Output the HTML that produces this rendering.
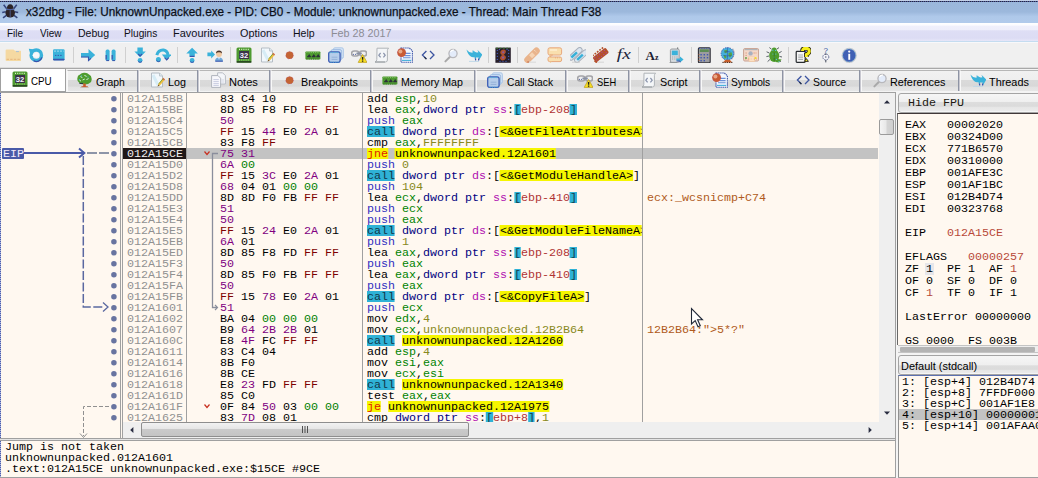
<!DOCTYPE html>
<html lang="en"><head><meta charset="utf-8"><title>x32dbg</title>
<style>
html,body{margin:0;padding:0}
body{width:1038px;height:478px;overflow:hidden;position:relative;background:#f0f0f0;font-family:"Liberation Sans",sans-serif;font-size:12px;color:#000}
div,span,svg{position:absolute;box-sizing:border-box}
.lb{white-space:pre;line-height:1;transform-origin:0 0}
.m{white-space:pre;font:11px/11px "Liberation Mono",monospace;transform-origin:0 0;transform:scaleX(1.06043);height:11px}
.m span{position:static}
.m i{font-style:normal;position:relative;top:1px}
.row{left:0;width:1038px;height:11px}
.cream{background:#fff8f0}
.vl{width:1px;background:#a0a0a0}
.hl{height:1px;background:#a0a0a0}
.g{color:#008000}.r{color:#800000}.p{color:#800080}.o{color:#808000}
.reg{color:#008300}.val{color:#888820}.mem{color:#000080}.seg{color:#b010b0}.push{color:#3030c0}
.br{background:#2fb2d6;color:#104050}.base{color:#b03434}
.y{background:#f6f600}.j{background:#f6f600;color:#e02000}.c{background:#2fb2d6;color:#12384a}
.cm{color:#b05a20}.ad{color:#909090}
.tab{top:70px;height:21px;border-top:1px solid #b6b6b6;border-left:1px solid #f8f8f8;background:linear-gradient(#f1f1f1 0,#eeeeee 44%,#dadada 47%,#d8d8d8 76%,#e2e2e2 80%,#e6e6e6 100%)}
.ts{top:70px;height:22px;width:2px;background:linear-gradient(90deg,#8e94a4 0,#8e94a4 60%,#c8c8d0 60%)}
</style></head><body>
<div style="left:0;top:0;width:1038px;height:23px;background:linear-gradient(#9bb7db 0,#9cb8dc 52%,#a6c1e4 62%,#afc9ea 72%,#b1caeb 100%)"></div>
<div style="left:0;top:0;width:1038px;height:1px;background:#c4d0e8"></div>
<div style="left:0;top:1px;width:1038px;height:1px;background:repeating-linear-gradient(90deg,#24243a 0,#24243a 1px,#4a5c9c 1px,#4a5c9c 2px)"></div>
<div style="left:0;top:23px;width:1038px;height:3px;background:linear-gradient(#ffffff 0,#fbfbff 70%,#f2f2fc 100%)"></div>
<div style="left:0;top:26px;width:1038px;height:15px;background:linear-gradient(#f0f0fc 0,#eeeefb 25%,#dedef5 32%,#dcdcf4 80%,#e6e6f8 100%)"></div>
<div style="left:0;top:41px;width:1038px;height:1px;background:#c4dcf0"></div>
<div style="left:0;top:42px;width:1038px;height:26px;background:#f0f0f0"></div>
<div style="left:0;top:42px;width:1038px;height:1px;background:#f8f8fa"></div>
<div style="left:0;top:67px;width:1038px;height:1px;background:#dcdcdc"></div>
<div style="left:0;top:68px;width:1038px;height:1px;background:#a8a8a8"></div>
<svg style="left:2.4px;top:3px" width="16.4" height="16.4" viewBox="0 0 16 16"><path d="M4.6 5.6 L1.6 1.8 M11.4 5.6 L14.4 1.8 M3.6 8.6 L0.2 9.2 M12.4 8.6 L15.8 9.2 M4.6 11.8 L1 14.6 M11.4 11.8 L15 14.6" stroke="#34447c" stroke-width="1.5"/><ellipse cx="8" cy="9.6" rx="4.7" ry="4.6" fill="#2c2428"/><path d="M4.8 5.6 Q4.8 1.2 8 1.2 Q11.2 1.2 11.2 5.6 Z" fill="#2c2428"/><path d="M4 6.4 H12" stroke="#5064a4" stroke-width="1"/><path d="M8 7 V14" stroke="#4c5c90" stroke-width=".9"/></svg>
<span class="lb" style="left:25.8px;top:5.30px;font-size:13px;transform:scaleX(0.9014);color:#0c1018;-webkit-text-stroke:0.25px #0c1018;">x32dbg - File: UnknownUnpacked.exe - PID: CB0 - Module: unknownunpacked.exe - Thread: Main Thread F38</span>
<span class="lb" style="left:7.3px;top:27.87px;font-size:11.5px;transform:scaleX(0.8688);color:#101018;">File</span>
<span class="lb" style="left:39.8px;top:27.87px;font-size:11.5px;transform:scaleX(0.8657);color:#101018;">View</span>
<span class="lb" style="left:77.5px;top:27.87px;font-size:11.5px;transform:scaleX(0.9147);color:#101018;">Debug</span>
<span class="lb" style="left:124.3px;top:27.87px;font-size:11.5px;transform:scaleX(0.8828);color:#101018;">Plugins</span>
<span class="lb" style="left:173.20000000000002px;top:27.87px;font-size:11.5px;transform:scaleX(0.9555);color:#101018;">Favourites</span>
<span class="lb" style="left:240.3px;top:27.87px;font-size:11.5px;transform:scaleX(0.9437);color:#101018;">Options</span>
<span class="lb" style="left:293.1px;top:27.87px;font-size:11.5px;transform:scaleX(0.9175);color:#101018;">Help</span>
<span class="lb" style="left:330.8px;top:27.87px;font-size:11.5px;transform:scaleX(0.9352);color:#8c8c94;">Feb 28 2017</span>
<svg style="left:5px;top:47px" width="16" height="16" viewBox="0 0 16 16"><path d="M0.6 3.4 Q0.6 2.4 1.6 2.4 H8.4 L10 3.8 H15.4 Q16.4 3.8 16.4 4.8 V13 Q16.4 14 15.4 14 H1.6 Q0.6 14 0.6 13 Z" fill="#f5d9a2"/><path d="M1.6 12.4 H15" stroke="#e9bd84" stroke-width="1.4" stroke-dasharray="2.4 1.2"/><path d="M11 4.6 H14" stroke="#a8c0d8" stroke-width="1"/></svg>
<svg style="left:28px;top:47px" width="16" height="16" viewBox="0 0 16 16"><circle cx="8.3" cy="8.2" r="5.2" fill="none" stroke="#3ab2da" stroke-width="3.4"/><path d="M13.2 9.5 A5.2 5.2 0 0 1 5 12.6" fill="none" stroke="#3a52ac" stroke-width="1.3" transform="translate(0.6,0.9)"/><path d="M0.8 1.8 L7.2 2.6 L2.4 7.6 Z" fill="#3ab2da"/><path d="M4 8.2 L8.8 5.6 V10.8 Z" fill="#fff"/><circle cx="8.6" cy="8.2" r="2.4" fill="#f6f8fc"/></svg>
<svg style="left:51px;top:47px" width="16" height="16" viewBox="0 0 16 16"><rect x="2" y="2.2" width="11.6" height="11" rx="1.2" fill="#3ab2da"/><rect x="2" y="11.8" width="11.6" height="1.6" rx=".8" fill="#3a52ac"/><path d="M3 4.2 H12.6" stroke="#8fd4ec" stroke-width="1.2" stroke-dasharray="2 1"/><path d="M4 8.4 H11.5" stroke="#3a52ac" stroke-width="1" stroke-dasharray="1.4 1.2"/></svg>
<div style="left:73px;top:47px;width:1px;height:16px;background:#d0d0d0"></div>
<svg style="left:80px;top:47px" width="16" height="16" viewBox="0 0 16 16"><path d="M1 6 H8.5 V2 L15.2 8 L8.5 14 V10.2 H1 Z" fill="#3ab2da"/><path d="M1 10 H8.5 V13.6 L11 11.4" fill="none" stroke="#3a52ac" stroke-width="1.1"/></svg>
<svg style="left:103px;top:47px" width="16" height="16" viewBox="0 0 16 16"><rect x="2.6" y="2.6" width="4" height="11.4" rx="1.6" fill="#3ab2da"/><rect x="8.6" y="2.6" width="4" height="11.4" rx="1.6" fill="#3ab2da"/><path d="M3.2 8 V12.5 M9.2 8 V12.5" stroke="#3a52ac" stroke-width="1.2"/><path d="M3.4 13.6 H6 M9.4 13.6 H12" stroke="#3a52ac" stroke-width="1"/></svg>
<div style="left:125px;top:47px;width:1px;height:16px;background:#d0d0d0"></div>
<svg style="left:132px;top:47px" width="16" height="16" viewBox="0 0 16 16"><path d="M5.4 0.6 H10.8 V4.6 H13.8 L8.1 10.2 L2.4 4.6 H5.4 Z" fill="#3ab2da"/><path d="M6.2 7 L8.1 9 L10 7" stroke="#3a52ac" stroke-width="1.2" fill="none"/><circle cx="8.1" cy="13.3" r="2.4" fill="#3ab2da"/><path d="M6.2 14.6 Q8.1 16.2 10 14.6" stroke="#3a52ac" stroke-width="1" fill="none"/></svg>
<svg style="left:155px;top:47px" width="16" height="16" viewBox="0 0 16 16"><path d="M1.8 8.2 Q3.4 2.6 8.6 3 Q12.4 3.6 13 8" fill="none" stroke="#3ab2da" stroke-width="3"/><path d="M6.8 7.6 H16.6 L11.7 13.2 Z" fill="#3ab2da"/><path d="M9.6 10.6 L11.7 12.9 L13.8 10.6" stroke="#3a52ac" stroke-width="1.1" fill="none"/><circle cx="3.4" cy="12.6" r="2.5" fill="#3ab2da"/><path d="M1.5 13.6 Q3.2 15.6 5.2 14" stroke="#3a52ac" stroke-width="1" fill="none"/></svg>
<div style="left:177px;top:47px;width:1px;height:16px;background:#d0d0d0"></div>
<svg style="left:184px;top:47px" width="16" height="16" viewBox="0 0 16 16"><path d="M8.1 0.8 L13.9 6.6 H10.8 V9.8 H5.4 V6.6 H2.3 Z" fill="#3ab2da"/><path d="M5.8 9.4 H10.4" stroke="#3a52ac" stroke-width="1.2"/><circle cx="8.1" cy="13.4" r="2.4" fill="#3ab2da"/><path d="M6.2 14.7 Q8.1 16.3 10 14.7" stroke="#3a52ac" stroke-width="1" fill="none"/></svg>
<svg style="left:207px;top:47px" width="16" height="16" viewBox="0 0 16 16"><path d="M0.4 5.4 H4.2 V3.4 L8 7.4 L4.2 11.4 V9.2 H0.4 Z" fill="#3ab2da"/><path d="M8 14.4 Q8 10.4 12 10.4 Q16 10.4 16 14.4 Z" fill="#6fa8d8"/><path d="M8.4 14.2 H15.8" stroke="#3a52ac" stroke-width="1"/><circle cx="12" cy="7" r="2.9" fill="#f0c8a0"/><path d="M9 6.4 Q9 3.4 12 3.4 Q15 3.4 15 6.4 Q13.6 5 12 5.2 Q10.4 5 9 6.4Z" fill="#4a3428"/><path d="M11 10.2 H13 L12 12.8 Z" fill="#e8eef8"/></svg>
<div style="left:230px;top:47px;width:1px;height:16px;background:#d0d0d0"></div>
<svg style="left:236px;top:47px" width="16" height="16" viewBox="0 0 16 16"><rect x="0.5" y="0.6" width="15" height="15" rx="1.5" fill="#4e9a30"/><rect x="0.5" y="14" width="15" height="1.8" rx=".9" fill="#2a4a20"/><path d="M3 2.4 H13.2" stroke="#d8f0c8" stroke-width="1.2" stroke-dasharray="1 1.2"/><path d="M3 13 H13" stroke="#a8d890" stroke-width="1" stroke-dasharray="1 1.2"/><rect x="3.2" y="4" width="9.8" height="8" fill="#3a3448"/><text x="8.1" y="11" font-family="Liberation Sans,sans-serif" font-weight="bold" font-size="7.6" fill="#f4f4ff" text-anchor="middle">32</text></svg>
<svg style="left:259px;top:47px" width="16" height="16" viewBox="0 0 16 16"><path d="M2.5 1 H10.5 L13.5 4 V15 H2.5 Z" fill="#f2f8fc" stroke="#b4bcc4" stroke-width="1"/><path d="M10.5 1 V4 H13.5" fill="#dfe8f0" stroke="#b4bcc4" stroke-width=".8"/><path d="M4 3 L9 13" stroke="#d6ecf6" stroke-width="3"/><path d="M8.6 14.6 L9.6 11.4 L14.2 5.8 L16 7.4 L11.4 13 Z" fill="#f0c040"/><path d="M13.3 6.9 L14.2 5.8 L16 7.4 L15.1 8.5Z" fill="#d06858"/><path d="M8.6 14.6 L9.3 12.4 L10.6 13.6Z" fill="#705030"/><path d="M10 11.6 L14 6.8" stroke="#70a040" stroke-width=".9"/></svg>
<svg style="left:282px;top:47px" width="16" height="16" viewBox="0 0 16 16"><circle cx="7.6" cy="8.2" r="3.8" fill="#c46434"/><circle cx="7.6" cy="8.2" r="3.8" fill="none" stroke="#b04890" stroke-width=".6" stroke-dasharray="1 2.4"/></svg>
<svg style="left:305px;top:47px" width="16" height="16" viewBox="0 0 16 16"><rect x="0.4" y="4.4" width="15" height="8.2" rx=".8" fill="#4e9a30"/><path d="M1.4 5.2 H14.6" stroke="#9cd080" stroke-width="1" stroke-dasharray="1 1.2"/><path d="M1.4 12 H14.6" stroke="#38702a" stroke-width="1" stroke-dasharray="1.2 1"/><path d="M2.4 9.4 L4.2 7 L6 9.4 Z M7 9.4 L8.8 7 L10.6 9.4 Z M11.4 9.4 L13.2 7 L15 9.4Z" fill="#2c3238"/><path d="M2.2 9.6 H14.8" stroke="#2c3238" stroke-width="1.4" stroke-dasharray="3.6 1"/></svg>
<svg style="left:328px;top:47px" width="16" height="16" viewBox="0 0 16 16"><rect x="5.4" y="0.8" width="10" height="10.6" rx="1.6" fill="#d4e4f6" stroke="#a8c4e4" stroke-width=".9"/><rect x="3" y="2.6" width="10.6" height="10.6" rx="1.6" fill="#c8dcf2" stroke="#98b8e0" stroke-width=".9"/><rect x="0.7" y="4.8" width="11.4" height="10.6" rx="2" fill="#b6cdea" stroke="#3c5cb4" stroke-width="1.3"/><path d="M1.6 5.6 H11.2" stroke="#48b8dc" stroke-width="1" stroke-dasharray="1.2 1.2"/><path d="M3.6 10.2 H9.4 M3.6 12.4 H9.4" stroke="#94b0d8" stroke-width="1"/><path d="M2.4 15.2 H10.6" stroke="#48b8dc" stroke-width=".9" stroke-dasharray="1.2 1.2"/></svg>
<svg style="left:351px;top:47px" width="16" height="16" viewBox="0 0 16 16"><rect x="0.6" y="4" width="7.2" height="5" rx="2.4" fill="none" stroke="#a4a4a8" stroke-width="1.6"/><rect x="8.6" y="4" width="7" height="5" rx="2.4" fill="none" stroke="#a4a4a8" stroke-width="1.6"/><rect x="5.4" y="5.6" width="5.4" height="1.8" fill="#8890a4"/><path d="M2 7.4 H6" stroke="#5a68a8" stroke-width="1" stroke-dasharray="1 1"/><path d="M11.6 7.4 L16 15.4 H7.2 Z" fill="#f8e020" stroke="#b89820" stroke-width=".7"/><path d="M11.6 10 V12.8 M11.6 13.6 V14.8" stroke="#202020" stroke-width="1.4"/></svg>
<svg style="left:374px;top:47px" width="16" height="16" viewBox="0 0 16 16"><path d="M3 1.2 H14.6 Q13.4 2.2 13.4 3.6 V13 Q13.4 15 11.4 15 H1 Q2.8 14.2 2.8 12.6 Z" fill="#f4f6f8" stroke="#b0b4b8" stroke-width="1"/><path d="M1 15 H11" stroke="#a0a4a8" stroke-width="1.2"/><path d="M6.6 6 L4.8 8.2 L6.6 10.4 M9.4 6 L11.2 8.2 L9.4 10.4" fill="none" stroke="#8a94ac" stroke-width="1.2"/></svg>
<svg style="left:397px;top:47px" width="16" height="16" viewBox="0 0 16 16"><path d="M4 1 H12.4 L15.4 4 V15.2 H4 Z" fill="#f4f8fe" stroke="#3c54a8" stroke-width="1.1" stroke-dasharray="1.4 .7"/><path d="M7.6 6.4 H13.6 M7.6 8.6 H13.6 M6 10.8 H13.6" stroke="#6a90d8" stroke-width="1.1"/><path d="M5 13.4 H14.2" stroke="#4cb4dc" stroke-width="1.2"/><circle cx="4.6" cy="5.6" r="4.4" fill="#c85c34"/><circle cx="3.4" cy="4.4" r="2" fill="#e8a888"/><circle cx="4.6" cy="5.6" r="4.2" fill="none" stroke="#b040a0" stroke-width=".5" stroke-dasharray="1 2.2"/></svg>
<svg style="left:420px;top:47px" width="16" height="16" viewBox="0 0 16 16"><path d="M6.4 4 L2.4 8 L6.4 12 M10 4 L14 8 L10 12" fill="none" stroke="#3c54a0" stroke-width="1.3"/><path d="M4.4 10.2 L6.4 12.2" stroke="#202838" stroke-width="1.2"/></svg>
<svg style="left:443px;top:47px" width="16" height="16" viewBox="0 0 16 16"><path d="M7 9.8 L2.4 14.4" stroke="#a8a8a8" stroke-width="2" stroke-linecap="round"/><circle cx="10" cy="6.6" r="4.1" fill="#e4ecfa" stroke="#b8b8bc" stroke-width="1.3"/><path d="M7.4 5 Q8.6 2.8 11 3.2" fill="none" stroke="#fff" stroke-width="1.2"/></svg>
<svg style="left:466px;top:47px" width="16" height="16" viewBox="0 0 16 16"><path d="M0.4 2.4 Q3.6 6.6 7.6 5.6 L6.4 3 L12.2 7 L9 12.8 L8.4 10 Q3.4 11.6 0.4 2.4Z" fill="#3ab2da"/><path d="M6 4.2 Q9.4 6.4 12.4 5.2 L11.4 2.8 L16.4 7.6 L12.8 13.6 L12.6 10.4 Q8.6 11.4 6 4.2Z" fill="#3ab2da"/><path d="M9.6 11.6 L9.6 13.4 M12.6 11.4 V13.6" stroke="#3a52ac" stroke-width="1.2"/><path d="M3 14.4 H13" stroke="#c0d8e8" stroke-width="1"/></svg>
<div style="left:488px;top:47px;width:1px;height:16px;background:#d0d0d0"></div>
<svg style="left:495px;top:47px" width="16" height="16" viewBox="0 0 16 16"><rect x="0.4" y="0.6" width="15.4" height="15.2" fill="#28202c"/><path d="M1 1.2 H15" stroke="#3c7c30" stroke-width="1" stroke-dasharray="2 1.4"/><path d="M8.4 2.6 Q11.8 2.8 10.6 5.8 Q9.8 7.4 8.6 8 Q11.8 9 10.6 11.8 Q9.4 13.6 7.2 13.4 Q4.2 12.6 5.4 9.8 Q6 8.6 7.4 8 Q4.4 7 5.6 4.2 Q6.4 2.6 8.4 2.6Z" fill="#b0522e"/><circle cx="8.2" cy="5.2" r="1" fill="#8858a8"/><circle cx="8" cy="10.6" r="1.1" fill="#8858a8"/><g fill="#4058b0"><circle cx="2.4" cy="3.4" r=".7"/><circle cx="2.4" cy="6.4" r=".7"/><circle cx="2.4" cy="9.4" r=".7"/><circle cx="2.4" cy="12.4" r=".7"/><circle cx="13.6" cy="3.4" r=".7"/><circle cx="13.6" cy="6.4" r=".7"/><circle cx="13.6" cy="9.4" r=".7"/><circle cx="13.6" cy="12.4" r=".7"/><circle cx="5" cy="14.4" r=".7"/><circle cx="8" cy="14.6" r=".7"/><circle cx="11" cy="14.4" r=".7"/><circle cx="4.4" cy="2.4" r=".6"/><circle cx="12" cy="2.4" r=".6"/></g></svg>
<div style="left:517px;top:47px;width:1px;height:16px;background:#d0d0d0"></div>
<svg style="left:524px;top:47px" width="16" height="16" viewBox="0 0 16 16"><rect x="-1.6" y="5" width="19.2" height="6.6" rx="3.3" fill="#e9b48c" transform="rotate(-45 8 8.3)"/><rect x="6" y="6.2" width="4.2" height="4.2" fill="#f6d4b4" transform="rotate(-45 8 8.3)"/><path d="M10.4 3.2 L13 5.8" stroke="#fbe8d4" stroke-width="1" stroke-dasharray="1 1"/><path d="M4 15.2 H12" stroke="#d8d8d8" stroke-width="1"/><path d="M3.4 15 H5" stroke="#c05830" stroke-width="1"/></svg>
<svg style="left:547px;top:47px" width="16" height="16" viewBox="0 0 16 16"><rect x="1" y="0.8" width="13.6" height="7.2" rx="1.8" fill="#f9dfae" stroke="#e8a87c" stroke-width="1"/><path d="M3 8 V10 L5.6 8Z" fill="#f9dfae" stroke="#e8a87c" stroke-width=".8"/><rect x="1" y="10" width="13.6" height="4.6" rx="1.6" fill="#f9dfae" stroke="#e8a87c" stroke-width="1"/><path d="M3 14.6 V16 L5.2 14.6Z" fill="#f0c890"/><path d="M3 3 H10" stroke="#fff4dc" stroke-width="1.2"/><path d="M8 10.8 H12.6" stroke="#e8a87c" stroke-width="1" stroke-dasharray="1 1"/></svg>
<svg style="left:570px;top:47px" width="16" height="16" viewBox="0 0 16 16"><g transform="rotate(-42 8 8)"><rect x="-1.4" y="3" width="16.4" height="4.8" rx="2.4" fill="#dce6f0" stroke="#a8b0bc" stroke-width="1"/><rect x="1.4" y="4.2" width="7.6" height="2.4" fill="#36b0d8"/><rect x="1.4" y="8.6" width="16.4" height="4.8" rx="2.4" fill="#dce6f0" stroke="#a8b0bc" stroke-width="1"/><rect x="4.2" y="9.8" width="7.6" height="2.4" fill="#36b0d8"/></g><path d="M2 15.2 H10" stroke="#d0d0d0" stroke-width="1"/></svg>
<svg style="left:593px;top:47px" width="16" height="16" viewBox="0 0 16 16"><g transform="rotate(-38 8 8)"><rect x="-0.4" y="4.8" width="16.4" height="6.2" rx="1.6" fill="#b4502a"/><path d="M1.4 4.2 V2.6 M4.4 4.2 V2.6 M7.4 4.2 V2.6 M10.4 4.2 V2.6 M13.4 4.2 V2.6" stroke="#b4502a" stroke-width="1.8"/><path d="M1 6.4 H15 M1 9.4 H15" stroke="#a848b8" stroke-width="1" stroke-dasharray="1 2"/></g><path d="M1.6 13.6 L4 15.6" stroke="#b4502a" stroke-width="2"/><path d="M5 15.2 H11" stroke="#d4d4d4" stroke-width="1"/></svg>
<svg style="left:616px;top:47px" width="16" height="16" viewBox="0 0 16 16"><text x="0.8" y="12.4" font-family="Liberation Serif,serif" font-style="italic" font-size="15.5" textLength="14" lengthAdjust="spacingAndGlyphs" fill="#20263c">fx</text></svg>
<div style="left:638px;top:47px;width:1px;height:16px;background:#d0d0d0"></div>
<svg style="left:645px;top:47px" width="16" height="16" viewBox="0 0 16 16"><text x="0.6" y="13" font-family="Liberation Serif,serif" font-weight="bold" font-size="13" fill="#1c2030">A</text><text x="10" y="13" font-family="Liberation Serif,serif" font-weight="bold" font-size="8" fill="#1c2030">z</text></svg>
<svg style="left:668px;top:47px" width="16" height="16" viewBox="0 0 16 16"><path d="M9.6 0.4 V3" stroke="#707478" stroke-width="1.2"/><rect x="2.4" y="2" width="8.8" height="13.4" rx="1.4" fill="#d6dade" stroke="#989ca0" stroke-width="1"/><rect x="3.8" y="3.6" width="6" height="4.6" fill="#3ab2da"/><path d="M4 10 H10 M4 12 H10" stroke="#a0a4a8" stroke-width="1" stroke-dasharray="1.2 1"/><path d="M8.4 11.4 H12 V9.6 L15.6 12.6 L12 15.6 V13.8 H8.4Z" fill="#3ab2da"/><path d="M8.6 14 H12 V15.4" stroke="#3a52ac" stroke-width="1" fill="none"/><path d="M1.6 15.6 H9" stroke="#909498" stroke-width="1"/></svg>
<div style="left:691px;top:47px;width:1px;height:16px;background:#d0d0d0"></div>
<svg style="left:697px;top:47px" width="16" height="16" viewBox="0 0 16 16"><rect x="1.4" y="0.8" width="11.8" height="15" rx="1" fill="#9c9ca0" stroke="#303038" stroke-width="1.1"/><rect x="2.8" y="2.4" width="9" height="2.6" fill="#5c8c54"/><path d="M2 1.4 H12.6" stroke="#4060b0" stroke-width="1" stroke-dasharray="1 1.4"/><g fill="#4058b0"><rect x="3.4" y="7" width="1.4" height="1.4"/><rect x="6.6" y="7" width="1.4" height="1.4"/><rect x="9.8" y="7" width="1.4" height="1.4"/><rect x="3.4" y="10" width="1.4" height="1.4"/><rect x="6.6" y="10" width="1.4" height="1.4"/><rect x="9.8" y="10" width="1.4" height="1.4"/><rect x="3.4" y="13" width="1.4" height="1.4"/><rect x="6.6" y="13" width="1.4" height="1.4"/></g><path d="M2 7 V14" stroke="#c06030" stroke-width=".8" stroke-dasharray="1 2"/></svg>
<svg style="left:720px;top:47px" width="16" height="16" viewBox="0 0 16 16"><path d="M12.6 1.6 Q16 6.6 11.6 12.4" fill="none" stroke="#b4b8bc" stroke-width="1.2"/><circle cx="7.4" cy="6.8" r="6.3" fill="#44b0dc"/><circle cx="7.4" cy="6.8" r="6.3" fill="none" stroke="#3c54b0" stroke-width=".9" stroke-dasharray="1.4 1"/><path d="M4 3.6 Q6 2.4 8 3.4 L7 5.6 L5 6.2 Z M8.6 6 L11.6 5.2 L12.2 8.2 L10 10.6 L8.4 8.6Z M3.6 8 L6 8.6 L6.4 11 L4.6 11.4Z" fill="#58a440"/><path d="M4.2 5 Q7.4 4 10.6 5 M3.4 8.4 Q7.4 9.6 11.4 8.4 M7.4 1 V12.6" stroke="#3050a8" stroke-width=".6" fill="none"/><path d="M3 15.6 L5.4 12.8 H9.8 L12.2 15.6Z" fill="#c8602c"/><path d="M2.4 15.4 H12.8" stroke="#402818" stroke-width="1" stroke-dasharray="1.2 1"/></svg>
<svg style="left:743px;top:47px" width="16" height="16" viewBox="0 0 16 16"><rect x="0.6" y="1.6" width="15" height="12.4" rx="1.2" fill="#f4d8c8" stroke="#c8a090" stroke-width="1"/><path d="M1.6 2.6 H14.6" stroke="#b0b4b8" stroke-width="1.2"/><circle cx="7.6" cy="6.4" r="2.2" fill="#a8b0c0"/><path d="M2.6 6 H4.6 M10.6 6 H13.4 M2.6 8.4 H4.6" stroke="#d08868" stroke-width="1" stroke-dasharray="1 1"/><path d="M5 9.4 H12 V14.8 H6 Z" fill="#f6cca4"/><path d="M2 12 H14" stroke="#e8a070" stroke-width="1" stroke-dasharray="1.4 1.4"/><circle cx="12.6" cy="11" r="1" fill="#f0e020"/><circle cx="3" cy="11" r=".9" fill="#58a040"/><path d="M6.4 11 H11 M6.4 13 H11" stroke="#fff4e4" stroke-width="1"/></svg>
<svg style="left:766px;top:47px" width="16" height="16" viewBox="0 0 16 16"><path d="M5.4 2 L3.4 0.6 M11 2 L13 0.6 M3.4 6 L0.6 4.8 M3 9 L0.4 9.6 M4 12.4 L1.6 14.6 M13 6 L15.6 4.4 M13.4 9.4 L16 10 M12.6 12.6 L15 14.8" stroke="#5c6468" stroke-width="1"/><ellipse cx="8.2" cy="8.8" rx="5" ry="6.2" fill="#4e9c2c"/><circle cx="8.2" cy="3.2" r="2.6" fill="#4e9c2c"/><path d="M11 12 L15.6 12.6 L13 15.4 L9.4 15Z" fill="#4e9c2c"/><g fill="#58c4e4"><circle cx="6.8" cy="3.2" r=".6"/><circle cx="9.6" cy="3.4" r=".6"/><circle cx="7" cy="7" r=".6"/><circle cx="9.8" cy="7" r=".6"/><circle cx="8.2" cy="10" r=".6"/><circle cx="10.4" cy="12.4" r=".6"/><circle cx="13" cy="14.6" r=".6"/></g><path d="M8.2 5.4 V14" stroke="#2c6c20" stroke-width=".7"/></svg>
<div style="left:788px;top:47px;width:1px;height:16px;background:#d0d0d0"></div>
<svg style="left:795px;top:47px" width="16" height="16" viewBox="0 0 16 16"><rect x="1.2" y="4.4" width="9" height="11" rx=".8" fill="#f6f6f6" stroke="#282c30" stroke-width="1.2"/><path d="M3.2 8 H8 M3.2 10.2 H8 M3.2 12.4 H8" stroke="#a8acb0" stroke-width="1.2"/><path d="M7.4 4 Q7.6 1.2 10.8 1.2 Q14.6 1.4 14.2 4.6 Q14 6.6 11.4 7.6 V10" fill="none" stroke="#201c10" stroke-width="4.6"/><path d="M7.4 4 Q7.6 1.2 10.8 1.2 Q14.6 1.4 14.2 4.6 Q14 6.6 11.4 7.6 V10" fill="none" stroke="#f4ec1c" stroke-width="3"/><path d="M9.4 14.4 L11.4 11.6 L13.4 14.4Z" fill="#f4ec1c" stroke="#201c10" stroke-width=".9"/><circle cx="10.6" cy="4.4" r=".7" fill="#3050b0"/></svg>
<svg style="left:818px;top:47px" width="16" height="16" viewBox="0 0 16 16"><text x="5.4" y="6.4" font-family="Liberation Sans,sans-serif" font-size="8" fill="#3050a0">?</text><circle cx="7.8" cy="10" r="3" fill="#f4f4f8" stroke="#5c6490" stroke-width="1" stroke-dasharray="1.4 1"/><path d="M7.8 6.4 V8 M7.8 13 V15.4" stroke="#404858" stroke-width="1"/><circle cx="7.8" cy="10" r=".8" fill="#606880"/></svg>
<svg style="left:841px;top:47px" width="16" height="16" viewBox="0 0 16 16"><circle cx="8.2" cy="8.4" r="7.6" fill="#c4c8d0"/><circle cx="8.2" cy="8.4" r="6.4" fill="#4060b4"/><circle cx="8.2" cy="8.4" r="6.4" fill="none" stroke="#58b8e0" stroke-width=".7" stroke-dasharray="1 2"/><rect x="7.3" y="6.8" width="1.9" height="6" fill="#fff"/><circle cx="8.2" cy="4.6" r="1.1" fill="#fff"/></svg>
<div style="left:0;top:69px;width:1038px;height:24px;background:#f4f4f4"></div>
<div style="left:0;top:92px;width:1038px;height:1px;background:#a0a0a0"></div>
<div style="left:0px;top:68px;width:66px;height:24px;background:#fff;border:1px solid #a0a0a0"></div>
<svg style="left:12px;top:71px" width="16" height="16" viewBox="0 0 16 16"><rect x="0.5" y="0.6" width="15" height="15" rx="1.5" fill="#4e9a30"/><rect x="0.5" y="14" width="15" height="1.8" rx=".9" fill="#2a4a20"/><path d="M3 2.4 H13.2" stroke="#d8f0c8" stroke-width="1.2" stroke-dasharray="1 1.2"/><path d="M3 13 H13" stroke="#a8d890" stroke-width="1" stroke-dasharray="1 1.2"/><rect x="3.2" y="4" width="9.8" height="8" fill="#3a3448"/><text x="8.1" y="11" font-family="Liberation Sans,sans-serif" font-weight="bold" font-size="7.6" fill="#f4f4ff" text-anchor="middle">32</text></svg>
<span class="lb" style="left:31.3px;top:76.27px;font-size:11.5px;transform:scaleX(0.8525);color:#000;">CPU</span>
<div class="tab" style="left:67px;width:70px"></div>
<svg style="left:76px;top:72px" width="16" height="16" viewBox="0 0 16 16"><path d="M1.4 6 Q1.4 3.4 4 2.6 Q5.6 0.6 8.4 0.8 Q11.4 0.6 13 2.6 Q15.6 3.6 15.6 6.4 Q16.2 9.6 13.6 11 Q11.6 12.8 8.6 12 Q5.4 13 3.4 11 Q0.8 9.6 1.4 6Z" fill="#4e9c2e"/><path d="M4.4 4.6 L6.4 5.6 M8.4 3.4 L10.6 4.4 M6.6 8 L8.8 7 M10.4 7.6 L12.6 6.6 M3.6 8.4 L5 9" stroke="#d4f0d4" stroke-width="1"/><circle cx="5.4" cy="3.8" r=".6" fill="#48c0e0"/><circle cx="12" cy="5" r=".6" fill="#48c0e0"/><circle cx="3.4" cy="7.6" r=".6" fill="#48c0e0"/><path d="M3.4 11.4 H7" stroke="#283048" stroke-width="1"/><path d="M7.2 11.6 H9.8 V14.2 H11.8 V15.4 H5.4 V14.2 H7.2Z" fill="#c85a2c"/><path d="M4 15.8 H13" stroke="#c0c0c0" stroke-width="1"/></svg>
<span class="lb" style="left:95.6px;top:77.27px;font-size:11.5px;transform:scaleX(0.9010);color:#000;">Graph</span>
<div class="tab" style="left:139px;width:58px"></div>
<svg style="left:149px;top:72px" width="16" height="16" viewBox="0 0 16 16"><path d="M2.5 1 H10.5 L13.5 4 V15 H2.5 Z" fill="#f2f8fc" stroke="#b4bcc4" stroke-width="1"/><path d="M10.5 1 V4 H13.5" fill="#dfe8f0" stroke="#b4bcc4" stroke-width=".8"/><path d="M4 3 L9 13" stroke="#d6ecf6" stroke-width="3"/><path d="M8.6 14.6 L9.6 11.4 L14.2 5.8 L16 7.4 L11.4 13 Z" fill="#f0c040"/><path d="M13.3 6.9 L14.2 5.8 L16 7.4 L15.1 8.5Z" fill="#d06858"/><path d="M8.6 14.6 L9.3 12.4 L10.6 13.6Z" fill="#705030"/><path d="M10 11.6 L14 6.8" stroke="#70a040" stroke-width=".9"/></svg>
<span class="lb" style="left:167.8px;top:77.27px;font-size:11.5px;transform:scaleX(0.9329);color:#000;">Log</span>
<div class="tab" style="left:199px;width:70px"></div>
<svg style="left:210px;top:72px" width="16" height="16" viewBox="0 0 16 16"><path d="M7.6 0.8 H12.6 L15.4 3.6 V12 H7.6Z" fill="#f4f6fa" stroke="#b8bcc4" stroke-width="1"/><path d="M1.6 3.6 H8 L10.6 6.2 V15.4 H1.6Z" fill="#f8f8fc" stroke="#b0b4bc" stroke-width="1"/><path d="M3.4 7.6 H8.8 M3.4 9.6 H8.8 M3.4 11.6 H8.8 M3.4 13.4 H8.8" stroke="#c8cce0" stroke-width="1"/><path d="M10.6 8 H14 M10.6 10 H14" stroke="#d4d8e4" stroke-width="1"/></svg>
<span class="lb" style="left:229.20000000000002px;top:77.27px;font-size:11.5px;transform:scaleX(0.9587);color:#000;">Notes</span>
<div class="tab" style="left:271px;width:99px"></div>
<svg style="left:282px;top:72px" width="16" height="16" viewBox="0 0 16 16"><circle cx="7.6" cy="8.2" r="3.8" fill="#c46434"/><circle cx="7.6" cy="8.2" r="3.8" fill="none" stroke="#b04890" stroke-width=".6" stroke-dasharray="1 2.4"/></svg>
<span class="lb" style="left:300.8px;top:77.27px;font-size:11.5px;transform:scaleX(0.9369);color:#000;">Breakpoints</span>
<div class="tab" style="left:372px;width:102px"></div>
<svg style="left:382px;top:72px" width="16" height="16" viewBox="0 0 16 16"><rect x="0.4" y="4.4" width="15" height="8.2" rx=".8" fill="#4e9a30"/><path d="M1.4 5.2 H14.6" stroke="#9cd080" stroke-width="1" stroke-dasharray="1 1.2"/><path d="M1.4 12 H14.6" stroke="#38702a" stroke-width="1" stroke-dasharray="1.2 1"/><path d="M2.4 9.4 L4.2 7 L6 9.4 Z M7 9.4 L8.8 7 L10.6 9.4 Z M11.4 9.4 L13.2 7 L15 9.4Z" fill="#2c3238"/><path d="M2.2 9.6 H14.8" stroke="#2c3238" stroke-width="1.4" stroke-dasharray="3.6 1"/></svg>
<span class="lb" style="left:401.3px;top:77.27px;font-size:11.5px;transform:scaleX(0.9210);color:#000;">Memory Map</span>
<div class="tab" style="left:476px;width:89px"></div>
<svg style="left:487px;top:72px" width="16" height="16" viewBox="0 0 16 16"><rect x="5.4" y="0.8" width="10" height="10.6" rx="1.6" fill="#d4e4f6" stroke="#a8c4e4" stroke-width=".9"/><rect x="3" y="2.6" width="10.6" height="10.6" rx="1.6" fill="#c8dcf2" stroke="#98b8e0" stroke-width=".9"/><rect x="0.7" y="4.8" width="11.4" height="10.6" rx="2" fill="#b6cdea" stroke="#3c5cb4" stroke-width="1.3"/><path d="M1.6 5.6 H11.2" stroke="#48b8dc" stroke-width="1" stroke-dasharray="1.2 1.2"/><path d="M3.6 10.2 H9.4 M3.6 12.4 H9.4" stroke="#94b0d8" stroke-width="1"/><path d="M2.4 15.2 H10.6" stroke="#48b8dc" stroke-width=".9" stroke-dasharray="1.2 1.2"/></svg>
<span class="lb" style="left:507.0px;top:77.27px;font-size:11.5px;transform:scaleX(0.8886);color:#000;">Call Stack</span>
<div class="tab" style="left:567px;width:61px"></div>
<svg style="left:577px;top:72px" width="16" height="16" viewBox="0 0 16 16"><rect x="0.6" y="4" width="7.2" height="5" rx="2.4" fill="none" stroke="#a4a4a8" stroke-width="1.6"/><rect x="8.6" y="4" width="7" height="5" rx="2.4" fill="none" stroke="#a4a4a8" stroke-width="1.6"/><rect x="5.4" y="5.6" width="5.4" height="1.8" fill="#8890a4"/><path d="M2 7.4 H6" stroke="#5a68a8" stroke-width="1" stroke-dasharray="1 1"/><path d="M11.6 7.4 L16 15.4 H7.2 Z" fill="#f8e020" stroke="#b89820" stroke-width=".7"/><path d="M11.6 10 V12.8 M11.6 13.6 V14.8" stroke="#202020" stroke-width="1.4"/></svg>
<span class="lb" style="left:596.5px;top:77.27px;font-size:11.5px;transform:scaleX(0.8077);color:#000;">SEH</span>
<div class="tab" style="left:630px;width:69px"></div>
<svg style="left:641px;top:72px" width="16" height="16" viewBox="0 0 16 16"><path d="M3 1.2 H14.6 Q13.4 2.2 13.4 3.6 V13 Q13.4 15 11.4 15 H1 Q2.8 14.2 2.8 12.6 Z" fill="#f4f6f8" stroke="#b0b4b8" stroke-width="1"/><path d="M1 15 H11" stroke="#a0a4a8" stroke-width="1.2"/><path d="M6.6 6 L4.8 8.2 L6.6 10.4 M9.4 6 L11.2 8.2 L9.4 10.4" fill="none" stroke="#8a94ac" stroke-width="1.2"/></svg>
<span class="lb" style="left:659.6999999999999px;top:77.27px;font-size:11.5px;transform:scaleX(0.9355);color:#000;">Script</span>
<div class="tab" style="left:701px;width:81px"></div>
<svg style="left:712px;top:72px" width="16" height="16" viewBox="0 0 16 16"><path d="M4 1 H12.4 L15.4 4 V15.2 H4 Z" fill="#f4f8fe" stroke="#3c54a8" stroke-width="1.1" stroke-dasharray="1.4 .7"/><path d="M7.6 6.4 H13.6 M7.6 8.6 H13.6 M6 10.8 H13.6" stroke="#6a90d8" stroke-width="1.1"/><path d="M5 13.4 H14.2" stroke="#4cb4dc" stroke-width="1.2"/><circle cx="4.6" cy="5.6" r="4.4" fill="#c85c34"/><circle cx="3.4" cy="4.4" r="2" fill="#e8a888"/><circle cx="4.6" cy="5.6" r="4.2" fill="none" stroke="#b040a0" stroke-width=".5" stroke-dasharray="1 2.2"/></svg>
<span class="lb" style="left:730.5999999999999px;top:77.27px;font-size:11.5px;transform:scaleX(0.8889);color:#000;">Symbols</span>
<div class="tab" style="left:784px;width:75px"></div>
<svg style="left:795px;top:72px" width="16" height="16" viewBox="0 0 16 16"><path d="M6.4 4 L2.4 8 L6.4 12 M10 4 L14 8 L10 12" fill="none" stroke="#3c54a0" stroke-width="1.3"/><path d="M4.4 10.2 L6.4 12.2" stroke="#202838" stroke-width="1.2"/></svg>
<span class="lb" style="left:813.4px;top:77.27px;font-size:11.5px;transform:scaleX(0.9084);color:#000;">Source</span>
<div class="tab" style="left:861px;width:97px"></div>
<svg style="left:872px;top:72px" width="16" height="16" viewBox="0 0 16 16"><path d="M7 9.8 L2.4 14.4" stroke="#a8a8a8" stroke-width="2" stroke-linecap="round"/><circle cx="10" cy="6.6" r="4.1" fill="#e4ecfa" stroke="#b8b8bc" stroke-width="1.3"/><path d="M7.4 5 Q8.6 2.8 11 3.2" fill="none" stroke="#fff" stroke-width="1.2"/></svg>
<span class="lb" style="left:890.3px;top:77.27px;font-size:11.5px;transform:scaleX(0.9420);color:#000;">References</span>
<div class="tab" style="left:960px;width:78px"></div>
<svg style="left:970px;top:72px" width="16" height="16" viewBox="0 0 16 16"><path d="M0.4 2.4 Q3.6 6.6 7.6 5.6 L6.4 3 L12.2 7 L9 12.8 L8.4 10 Q3.4 11.6 0.4 2.4Z" fill="#3ab2da"/><path d="M6 4.2 Q9.4 6.4 12.4 5.2 L11.4 2.8 L16.4 7.6 L12.8 13.6 L12.6 10.4 Q8.6 11.4 6 4.2Z" fill="#3ab2da"/><path d="M9.6 11.6 L9.6 13.4 M12.6 11.4 V13.6" stroke="#3a52ac" stroke-width="1.2"/><path d="M3 14.4 H13" stroke="#c0d8e8" stroke-width="1"/></svg>
<span class="lb" style="left:989.3px;top:77.27px;font-size:11.5px;transform:scaleX(0.9457);color:#000;">Threads</span>
<div class="ts" style="left:137px"></div>
<div class="ts" style="left:197px"></div>
<div class="ts" style="left:269px"></div>
<div class="ts" style="left:370px"></div>
<div class="ts" style="left:474px"></div>
<div class="ts" style="left:565px"></div>
<div class="ts" style="left:628px"></div>
<div class="ts" style="left:699px"></div>
<div class="ts" style="left:782px"></div>
<div class="ts" style="left:859px"></div>
<div class="ts" style="left:958px"></div>
<div class="cream" style="left:0;top:93px;width:896px;height:345px"></div>
<div style="left:0;top:93px;width:1px;height:385px;background:repeating-linear-gradient(#4a5cac 0,#4a5cac 1px,#aab4dc 1px,#aab4dc 2px)"></div>
<div class="m" style="left:127px;top:93px;color:#909090"><i>012A15BB</i></div>
<div class="m" style="left:219.5px;top:93px"><i>83</i> <i>C4</i> <i>10</i></div>
<div class="m" style="left:367px;top:93px;width:259.33px;overflow:hidden"><i>add </i><span class="reg"><i>esp</i></span><i>,</i><span class="val"><i>10</i></span></div>
<div class="m" style="left:127px;top:104px;color:#909090"><i>012A15BE</i></div>
<div class="m" style="left:219.5px;top:104px"><i>8D</i> <i>85</i> <i>F8</i> <i>FD</i> <span class="r"><i>FF</i></span> <span class="r"><i>FF</i></span></div>
<div class="m" style="left:367px;top:104px;width:259.33px;overflow:hidden"><i>lea </i><span class="reg"><i>eax</i></span><i>,</i><span class="mem"><i>dword ptr </i></span><span class="seg"><i>ss</i></span><i>:</i><span class="br"><i>[</i></span><span class="base"><i>ebp-208</i></span><span class="br"><i>]</i></span></div>
<div class="m" style="left:127px;top:115px;color:#909090"><i>012A15C4</i></div>
<div class="m" style="left:219.5px;top:115px"><span class="p"><i>50</i></span></div>
<div class="m" style="left:367px;top:115px;width:259.33px;overflow:hidden"><span class="push"><i>push </i></span><span class="reg"><i>eax</i></span></div>
<div class="m" style="left:127px;top:126px;color:#909090"><i>012A15C5</i></div>
<div class="m" style="left:219.5px;top:126px"><span class="r"><i>FF</i></span> <i>15</i> <span class="p"><i>44</i></span> <i>E0</i> <span class="p"><i>2A</i></span> <i>01</i></div>
<div class="m" style="left:367px;top:126px;width:259.33px;overflow:hidden"><span class="c"><i>call</i></span><i> </i><span class="mem"><i>dword ptr </i></span><span class="seg"><i>ds</i></span><i>:[</i><span class="y"><i>&lt;&amp;GetFileAttributesA&gt;</i></span><i>]</i></div>
<div class="m" style="left:127px;top:137px;color:#909090"><i>012A15CB</i></div>
<div class="m" style="left:219.5px;top:137px"><i>83</i> <i>F8</i> <span class="r"><i>FF</i></span></div>
<div class="m" style="left:367px;top:137px;width:259.33px;overflow:hidden"><i>cmp </i><span class="reg"><i>eax</i></span><i>,</i><span class="val"><i>FFFFFFFF</i></span></div>
<div style="left:187px;top:148px;width:691px;height:11px;background:#c3c3c3"></div>
<div style="left:123px;top:148px;width:64px;height:11px;background:#201818"></div>
<div class="m" style="left:127px;top:148px;color:#f0f0f0"><i>012A15CE</i></div>
<div class="m" style="left:219.5px;top:148px"><span class="p"><i>75</i></span> <span class="p"><i>31</i></span></div>
<div class="m" style="left:367px;top:148px;width:259.33px;overflow:hidden"><span class="j"><i>jne</i></span><i> </i><span class="y"><i>unknownunpacked.12A1601</i></span></div>
<div class="m" style="left:127px;top:159px;color:#909090"><i>012A15D0</i></div>
<div class="m" style="left:219.5px;top:159px"><span class="p"><i>6A</i></span> <span class="g"><i>00</i></span></div>
<div class="m" style="left:367px;top:159px;width:259.33px;overflow:hidden"><span class="push"><i>push </i></span><span class="val"><i>0</i></span></div>
<div class="m" style="left:127px;top:170px;color:#909090"><i>012A15D2</i></div>
<div class="m" style="left:219.5px;top:170px"><span class="r"><i>FF</i></span> <i>15</i> <span class="p"><i>3C</i></span> <i>E0</i> <span class="p"><i>2A</i></span> <i>01</i></div>
<div class="m" style="left:367px;top:170px;width:259.33px;overflow:hidden"><span class="c"><i>call</i></span><i> </i><span class="mem"><i>dword ptr </i></span><span class="seg"><i>ds</i></span><i>:[</i><span class="y"><i>&lt;&amp;GetModuleHandleA&gt;</i></span><i>]</i></div>
<div class="m" style="left:127px;top:181px;color:#909090"><i>012A15D8</i></div>
<div class="m" style="left:219.5px;top:181px"><span class="p"><i>68</i></span> <i>04</i> <i>01</i> <span class="g"><i>00</i></span> <span class="g"><i>00</i></span></div>
<div class="m" style="left:367px;top:181px;width:259.33px;overflow:hidden"><span class="push"><i>push </i></span><span class="val"><i>104</i></span></div>
<div class="m" style="left:127px;top:192px;color:#909090"><i>012A15DD</i></div>
<div class="m" style="left:219.5px;top:192px"><i>8D</i> <i>8D</i> <i>F0</i> <i>FB</i> <span class="r"><i>FF</i></span> <span class="r"><i>FF</i></span></div>
<div class="m" style="left:367px;top:192px;width:259.33px;overflow:hidden"><i>lea </i><span class="reg"><i>ecx</i></span><i>,</i><span class="mem"><i>dword ptr </i></span><span class="seg"><i>ss</i></span><i>:</i><span class="br"><i>[</i></span><span class="base"><i>ebp-410</i></span><span class="br"><i>]</i></span></div>
<div class="m cm" style="left:647px;top:192px"><i>ecx:_wcsnicmp+C74</i></div>
<div class="m" style="left:127px;top:203px;color:#909090"><i>012A15E3</i></div>
<div class="m" style="left:219.5px;top:203px"><span class="p"><i>51</i></span></div>
<div class="m" style="left:367px;top:203px;width:259.33px;overflow:hidden"><span class="push"><i>push </i></span><span class="reg"><i>ecx</i></span></div>
<div class="m" style="left:127px;top:214px;color:#909090"><i>012A15E4</i></div>
<div class="m" style="left:219.5px;top:214px"><span class="p"><i>50</i></span></div>
<div class="m" style="left:367px;top:214px;width:259.33px;overflow:hidden"><span class="push"><i>push </i></span><span class="reg"><i>eax</i></span></div>
<div class="m" style="left:127px;top:225px;color:#909090"><i>012A15E5</i></div>
<div class="m" style="left:219.5px;top:225px"><span class="r"><i>FF</i></span> <i>15</i> <span class="p"><i>24</i></span> <i>E0</i> <span class="p"><i>2A</i></span> <i>01</i></div>
<div class="m" style="left:367px;top:225px;width:259.33px;overflow:hidden"><span class="c"><i>call</i></span><i> </i><span class="mem"><i>dword ptr </i></span><span class="seg"><i>ds</i></span><i>:[</i><span class="y"><i>&lt;&amp;GetModuleFileNameA&gt;</i></span><i>]</i></div>
<div class="m" style="left:127px;top:236px;color:#909090"><i>012A15EB</i></div>
<div class="m" style="left:219.5px;top:236px"><span class="p"><i>6A</i></span> <i>01</i></div>
<div class="m" style="left:367px;top:236px;width:259.33px;overflow:hidden"><span class="push"><i>push </i></span><span class="val"><i>1</i></span></div>
<div class="m" style="left:127px;top:247px;color:#909090"><i>012A15ED</i></div>
<div class="m" style="left:219.5px;top:247px"><i>8D</i> <i>85</i> <i>F8</i> <i>FD</i> <span class="r"><i>FF</i></span> <span class="r"><i>FF</i></span></div>
<div class="m" style="left:367px;top:247px;width:259.33px;overflow:hidden"><i>lea </i><span class="reg"><i>eax</i></span><i>,</i><span class="mem"><i>dword ptr </i></span><span class="seg"><i>ss</i></span><i>:</i><span class="br"><i>[</i></span><span class="base"><i>ebp-208</i></span><span class="br"><i>]</i></span></div>
<div class="m" style="left:127px;top:258px;color:#909090"><i>012A15F3</i></div>
<div class="m" style="left:219.5px;top:258px"><span class="p"><i>50</i></span></div>
<div class="m" style="left:367px;top:258px;width:259.33px;overflow:hidden"><span class="push"><i>push </i></span><span class="reg"><i>eax</i></span></div>
<div class="m" style="left:127px;top:269px;color:#909090"><i>012A15F4</i></div>
<div class="m" style="left:219.5px;top:269px"><i>8D</i> <i>85</i> <i>F0</i> <i>FB</i> <span class="r"><i>FF</i></span> <span class="r"><i>FF</i></span></div>
<div class="m" style="left:367px;top:269px;width:259.33px;overflow:hidden"><i>lea </i><span class="reg"><i>eax</i></span><i>,</i><span class="mem"><i>dword ptr </i></span><span class="seg"><i>ss</i></span><i>:</i><span class="br"><i>[</i></span><span class="base"><i>ebp-410</i></span><span class="br"><i>]</i></span></div>
<div class="m" style="left:127px;top:280px;color:#909090"><i>012A15FA</i></div>
<div class="m" style="left:219.5px;top:280px"><span class="p"><i>50</i></span></div>
<div class="m" style="left:367px;top:280px;width:259.33px;overflow:hidden"><span class="push"><i>push </i></span><span class="reg"><i>eax</i></span></div>
<div class="m" style="left:127px;top:291px;color:#909090"><i>012A15FB</i></div>
<div class="m" style="left:219.5px;top:291px"><span class="r"><i>FF</i></span> <i>15</i> <span class="p"><i>78</i></span> <i>E0</i> <span class="p"><i>2A</i></span> <i>01</i></div>
<div class="m" style="left:367px;top:291px;width:259.33px;overflow:hidden"><span class="c"><i>call</i></span><i> </i><span class="mem"><i>dword ptr </i></span><span class="seg"><i>ds</i></span><i>:[</i><span class="y"><i>&lt;&amp;CopyFileA&gt;</i></span><i>]</i></div>
<div class="m" style="left:127px;top:302px;color:#909090"><i>012A1601</i></div>
<div class="m" style="left:219.5px;top:302px"><span class="p"><i>51</i></span></div>
<div class="m" style="left:367px;top:302px;width:259.33px;overflow:hidden"><span class="push"><i>push </i></span><span class="reg"><i>ecx</i></span></div>
<div class="m" style="left:127px;top:313px;color:#909090"><i>012A1602</i></div>
<div class="m" style="left:219.5px;top:313px"><i>BA</i> <i>04</i> <span class="g"><i>00</i></span> <span class="g"><i>00</i></span> <span class="g"><i>00</i></span></div>
<div class="m" style="left:367px;top:313px;width:259.33px;overflow:hidden"><i>mov </i><span class="reg"><i>edx</i></span><i>,</i><span class="val"><i>4</i></span></div>
<div class="m" style="left:127px;top:324px;color:#909090"><i>012A1607</i></div>
<div class="m" style="left:219.5px;top:324px"><i>B9</i> <span class="p"><i>64</i></span> <span class="p"><i>2B</i></span> <span class="p"><i>2B</i></span> <i>01</i></div>
<div class="m" style="left:367px;top:324px;width:259.33px;overflow:hidden"><i>mov </i><span class="reg"><i>ecx</i></span><i>,</i><span class="val"><i>unknownunpacked.12B2B64</i></span></div>
<div class="m cm" style="left:647px;top:324px"><i>12B2B64:"&gt;5*?"</i></div>
<div class="m" style="left:127px;top:335px;color:#909090"><i>012A160C</i></div>
<div class="m" style="left:219.5px;top:335px"><i>E8</i> <span class="p"><i>4F</i></span> <i>FC</i> <span class="r"><i>FF</i></span> <span class="r"><i>FF</i></span></div>
<div class="m" style="left:367px;top:335px;width:259.33px;overflow:hidden"><span class="c"><i>call</i></span><i> </i><span class="y"><i>unknownunpacked.12A1260</i></span></div>
<div class="m" style="left:127px;top:346px;color:#909090"><i>012A1611</i></div>
<div class="m" style="left:219.5px;top:346px"><i>83</i> <i>C4</i> <i>04</i></div>
<div class="m" style="left:367px;top:346px;width:259.33px;overflow:hidden"><i>add </i><span class="reg"><i>esp</i></span><i>,</i><span class="val"><i>4</i></span></div>
<div class="m" style="left:127px;top:357px;color:#909090"><i>012A1614</i></div>
<div class="m" style="left:219.5px;top:357px"><i>8B</i> <i>F0</i></div>
<div class="m" style="left:367px;top:357px;width:259.33px;overflow:hidden"><i>mov </i><span class="reg"><i>esi</i></span><i>,</i><span class="reg"><i>eax</i></span></div>
<div class="m" style="left:127px;top:368px;color:#909090"><i>012A1616</i></div>
<div class="m" style="left:219.5px;top:368px"><i>8B</i> <i>CE</i></div>
<div class="m" style="left:367px;top:368px;width:259.33px;overflow:hidden"><i>mov </i><span class="reg"><i>ecx</i></span><i>,</i><span class="reg"><i>esi</i></span></div>
<div class="m" style="left:127px;top:379px;color:#909090"><i>012A1618</i></div>
<div class="m" style="left:219.5px;top:379px"><i>E8</i> <span class="p"><i>23</i></span> <i>FD</i> <span class="r"><i>FF</i></span> <span class="r"><i>FF</i></span></div>
<div class="m" style="left:367px;top:379px;width:259.33px;overflow:hidden"><span class="c"><i>call</i></span><i> </i><span class="y"><i>unknownunpacked.12A1340</i></span></div>
<div class="m" style="left:127px;top:390px;color:#909090"><i>012A161D</i></div>
<div class="m" style="left:219.5px;top:390px"><i>85</i> <i>C0</i></div>
<div class="m" style="left:367px;top:390px;width:259.33px;overflow:hidden"><i>test </i><span class="reg"><i>eax</i></span><i>,</i><span class="reg"><i>eax</i></span></div>
<div class="m" style="left:127px;top:401px;color:#909090"><i>012A161F</i></div>
<div class="m" style="left:219.5px;top:401px"><i>0F</i> <i>84</i> <span class="p"><i>50</i></span> <i>03</i> <span class="g"><i>00</i></span> <span class="g"><i>00</i></span></div>
<div class="m" style="left:367px;top:401px;width:259.33px;overflow:hidden"><span class="j"><i>je</i></span><i> </i><span class="y"><i>unknownunpacked.12A1975</i></span></div>
<div class="m" style="left:127px;top:412px;color:#909090"><i>012A1625</i></div>
<div class="m" style="left:219.5px;top:412px"><i>83</i> <span class="p"><i>7D</i></span> <i>08</i> <i>01</i></div>
<div class="m" style="left:367px;top:412px;width:259.33px;overflow:hidden"><i>cmp </i><span class="mem"><i>dword ptr </i></span><span class="seg"><i>ss</i></span><i>:</i><span class="br"><i>[</i></span><span class="base"><i>ebp+8</i></span><span class="br"><i>]</i></span><i>,</i><span class="val"><i>1</i></span></div>
<div class="vl" style="left:120px;top:93px;height:345px"></div>
<div class="vl" style="left:122px;top:93px;height:345px"></div>
<div class="vl" style="left:186px;top:93px;height:329px"></div>
<div class="vl" style="left:362px;top:93px;height:329px"></div>
<div class="vl" style="left:642px;top:93px;height:329px"></div>
<svg style="left:200px;top:148px" width="22" height="170" viewBox="0 0 22 170"><path d="M4.5 3.5 L7 6.5 L9.5 3.5" fill="none" stroke="#c83020" stroke-width="1.2"/><path d="M18 5.5 H12.5 V159.5 H17" fill="none" stroke="#8a8e9c" stroke-width="1.3"/><path d="M15 157 L17.5 159.5 L15 162" fill="none" stroke="#8a8e9c" stroke-width="1.2"/></svg>
<svg style="left:200px;top:401px" width="22" height="11" viewBox="0 0 22 11"><path d="M4.5 3.5 L7 6.5 L9.5 3.5" fill="none" stroke="#c83020" stroke-width="1.2"/></svg>
<div style="left:2px;top:148px;width:22px;height:11px;background:#4a5aa8;border-radius:1px"></div>
<div class="m" style="left:3px;top:148px;color:#f4eaf8"><i>EIP</i></div>
<svg style="left:0;top:93px" width="120" height="329" viewBox="0 0 120 329"><g fill="#6874a0"><circle cx="113.9" cy="5.8" r="2.75"/><circle cx="113.9" cy="16.8" r="2.75"/><circle cx="113.9" cy="27.8" r="2.75"/><circle cx="113.9" cy="38.8" r="2.75"/><circle cx="113.9" cy="49.8" r="2.75"/><circle cx="113.9" cy="60.8" r="2.75"/><circle cx="113.9" cy="71.8" r="2.75"/><circle cx="113.9" cy="82.8" r="2.75"/><circle cx="113.9" cy="93.8" r="2.75"/><circle cx="113.9" cy="104.8" r="2.75"/><circle cx="113.9" cy="115.8" r="2.75"/><circle cx="113.9" cy="126.8" r="2.75"/><circle cx="113.9" cy="137.8" r="2.75"/><circle cx="113.9" cy="148.8" r="2.75"/><circle cx="113.9" cy="159.8" r="2.75"/><circle cx="113.9" cy="170.8" r="2.75"/><circle cx="113.9" cy="181.8" r="2.75"/><circle cx="113.9" cy="192.8" r="2.75"/><circle cx="113.9" cy="203.8" r="2.75"/><circle cx="113.9" cy="214.8" r="2.75"/><circle cx="113.9" cy="225.8" r="2.75"/><circle cx="113.9" cy="236.8" r="2.75"/><circle cx="113.9" cy="247.8" r="2.75"/><circle cx="113.9" cy="258.8" r="2.75"/><circle cx="113.9" cy="269.8" r="2.75"/><circle cx="113.9" cy="280.8" r="2.75"/><circle cx="113.9" cy="291.8" r="2.75"/><circle cx="113.9" cy="302.8" r="2.75"/><circle cx="113.9" cy="313.8" r="2.75"/><circle cx="113.9" cy="324.8" r="2.75"/></g></svg>
<svg style="left:0;top:93px" width="120" height="346" viewBox="0 0 120 346">
<path d="M24 60 H84" stroke="#4a5aa8" stroke-width="2" fill="none"/>
<path d="M79 55.6 L84.3 60 L79 64.4" stroke="#4a5aa8" stroke-width="2" fill="none"/>
<path d="M87 60 H109" stroke="#6a7490" stroke-width="1.4" stroke-dasharray="10 2" fill="none"/>
<path d="M83.3 63 V214 H104" stroke="#5a68a0" stroke-width="1.5" stroke-dasharray="9 2.5" fill="none"/>
<path d="M103 209.5 L108 214 L103 218.5" stroke="#5a68a0" stroke-width="1.3" fill="none"/>
<path d="M109 313.5 H83.5 V343" stroke="#909090" stroke-width="1" stroke-dasharray="4 2" fill="none"/>
<path d="M80 340.5 L83.5 344.5 L87 340.5" stroke="#909090" stroke-width="1" fill="none"/>
</svg>
<div style="left:123px;top:422px;width:757px;height:16px;background:#efefef"></div>
<div style="left:141px;top:422px;width:328px;height:15px;border:1px solid #8e8e8e;border-radius:2px;background:linear-gradient(#f2f2f2 0,#e6e6e6 45%,#cacaca 50%,#c4c4c4 100%)"></div>
<svg style="left:123px;top:422px" width="18" height="16" viewBox="0 0 18 16"><path d="M10.4 5 L7.2 8 L10.4 11 Z" fill="#282c40"/></svg>
<svg style="left:860.6px;top:422px" width="18" height="16" viewBox="0 0 18 16"><path d="M7.6 5 L10.8 8 L7.6 11 Z" fill="#282c40"/></svg>
<svg style="left:300px;top:425px" width="10" height="9" viewBox="0 0 10 9"><path d="M2.5 1 V8 M5 1 V8 M7.5 1 V8" stroke="#505050" stroke-width="1"/></svg>
<div style="left:879px;top:93px;width:17px;height:345px;background:#efefef"></div>
<div style="left:879px;top:119px;width:15px;height:16px;border:1px solid #9a9a9a;border-radius:2px;background:linear-gradient(90deg,#f4f4f4 0,#e8e8e8 45%,#d4d4d4 55%,#cfcfcf 100%)"></div>
<svg style="left:879px;top:94px" width="16" height="16" viewBox="0 0 16 16"><path d="M5 9.4 L8 6.2 L11 9.4 Z" fill="#282c40"/></svg>
<svg style="left:879px;top:405px" width="16" height="16" viewBox="0 0 16 16"><path d="M5 6.6 L8 9.8 L11 6.6 Z" fill="#282c40"/></svg>
<div class="hl" style="left:0;top:438px;width:896px;background:#a0a0a0"></div>
<div style="left:0;top:439px;width:896px;height:1px;background:#e4e4e4"></div>
<div class="hl" style="left:0;top:440px;width:896px;background:#a0a0a0"></div>
<div class="cream" style="left:1px;top:441px;width:894px;height:36px"></div>
<div class="vl" style="left:895px;top:93px;height:385px"></div>
<div class="hl" style="left:0;top:477px;width:896px"></div>
<div class="m" style="left:5.3px;top:441px"><i>Jump is not taken</i></div>
<div class="m" style="left:5.3px;top:452px"><i>unknownunpacked.012A1601</i></div>
<div class="m" style="left:5.3px;top:463px"><i>.text:012A15CE unknownunpacked.exe:$15CE #9CE</i></div>
<div style="left:896px;top:91px;width:142px;height:387px;background:#f4f4f4"></div>
<div style="left:898px;top:93px;width:146px;height:20px;border:1px solid #a4a4a4;border-radius:3px;background:linear-gradient(#f6f6f6 0,#efefef 44%,#dddddd 47%,#dbdbdb 68%,#e6e6e6 74%,#eaeaea 92%,#fafafa 100%)"></div>
<div class="m" style="left:908.2px;top:97px;color:#201810"><i>Hide FPU</i></div>
<div class="cream" style="left:897px;top:113px;width:141px;height:232px;border-top:1px solid #403838;border-left:1px solid #686868"></div>
<div style="left:899px;top:114px;width:139px;height:231px;overflow:hidden">
<div class="m" style="left:6.2px;top:5px;color2:#000"><i>EAX</i></div>
<div class="m" style="left:48.2px;top:5px;color2:#000"><i>00002020</i></div>
<div class="m" style="left:6.2px;top:17px;color2:#000"><i>EBX</i></div>
<div class="m" style="left:48.2px;top:17px;color2:#000"><i>00324D00</i></div>
<div class="m" style="left:6.2px;top:29px;color2:#000"><i>ECX</i></div>
<div class="m" style="left:48.2px;top:29px;color2:#000"><i>771B6570</i></div>
<div class="m" style="left:6.2px;top:41px;color2:#000"><i>EDX</i></div>
<div class="m" style="left:48.2px;top:41px;color2:#000"><i>00310000</i></div>
<div class="m" style="left:6.2px;top:53px;color2:#000"><i>EBP</i></div>
<div class="m" style="left:48.2px;top:53px;color2:#000"><i>001AFE3C</i></div>
<div class="m" style="left:6.2px;top:65px;color2:#000"><i>ESP</i></div>
<div class="m" style="left:48.2px;top:65px;color2:#000"><i>001AF1BC</i></div>
<div class="m" style="left:6.2px;top:77px;color2:#000"><i>ESI</i></div>
<div class="m" style="left:48.2px;top:77px;color2:#000"><i>012B4D74</i></div>
<div class="m" style="left:6.2px;top:89px;color2:#000"><i>EDI</i></div>
<div class="m" style="left:48.2px;top:89px;color2:#000"><i>00323768</i></div>
<div class="m" style="left:6.2px;top:113px;color2:#000"><i>EIP</i></div>
<div class="m" style="left:48.2px;top:113px;color:#b84838;color2:#000"><i>012A15CE</i></div>
<div class="m" style="left:6.2px;top:137px;color2:#000"><i>EFLAGS</i></div>
<div class="m" style="left:69.2px;top:137px;color:#b84838;color2:#000"><i>00000257</i></div>
<div class="m" style="left:6.2px;top:149px;color2:#000"><i>ZF</i></div>
<div style="left:26.2px;top:149px;width:9px;height:12px;background:#e6e6ea"></div>
<div class="m" style="left:27.2px;top:149px;color2:#000"><i>1</i></div>
<div class="m" style="left:48.2px;top:149px;color2:#000"><i>PF</i></div>
<div class="m" style="left:69.2px;top:149px;color2:#000"><i>1</i></div>
<div class="m" style="left:90.2px;top:149px;color2:#000"><i>AF</i></div>
<div class="m" style="left:111.2px;top:149px;color:#b84838;color2:#000"><i>1</i></div>
<div class="m" style="left:6.2px;top:161px;color2:#000"><i>OF</i></div>
<div class="m" style="left:27.2px;top:161px;color2:#000"><i>0</i></div>
<div class="m" style="left:48.2px;top:161px;color2:#000"><i>SF</i></div>
<div class="m" style="left:69.2px;top:161px;color2:#000"><i>0</i></div>
<div class="m" style="left:90.2px;top:161px;color2:#000"><i>DF</i></div>
<div class="m" style="left:111.2px;top:161px;color2:#000"><i>0</i></div>
<div class="m" style="left:6.2px;top:173px;color2:#000"><i>CF</i></div>
<div class="m" style="left:27.2px;top:173px;color:#b84838;color2:#000"><i>1</i></div>
<div class="m" style="left:48.2px;top:173px;color2:#000"><i>TF</i></div>
<div class="m" style="left:69.2px;top:173px;color2:#000"><i>0</i></div>
<div class="m" style="left:90.2px;top:173px;color2:#000"><i>IF</i></div>
<div class="m" style="left:111.2px;top:173px;color2:#000"><i>1</i></div>
<div class="m" style="left:6.2px;top:197px;color2:#000"><i>LastError</i></div>
<div class="m" style="left:76.2px;top:197px;color2:#000"><i>00000000</i></div>
<div class="m" style="left:6.2px;top:221px;color2:#000"><i>GS</i></div>
<div class="m" style="left:27.2px;top:221px;color2:#000"><i>0000</i></div>
<div class="m" style="left:69.2px;top:221px;color2:#000"><i>FS</i></div>
<div class="m" style="left:90.2px;top:221px;color2:#000"><i>003B</i></div>
</div>
<div style="left:898px;top:345px;width:140px;height:8px;background:#eeeeee;border-top:1px solid #c4c4c4;border-bottom:1px solid #c4c4c4"></div>
<div style="left:900px;top:347px;width:135px;height:5px;border-radius:1px;background:#b4b4b4"></div>
<div style="left:898px;top:355px;width:146px;height:20px;border:1px solid #a4a4a4;border-radius:3px;background:linear-gradient(#f6f6f6 0,#efefef 50%,#dddddd 54%,#dbdbdb 74%,#e6e6e6 80%,#eaeaea 92%,#fafafa 100%)"></div>
<span class="lb" style="left:900.8px;top:360.77px;font-size:11.5px;transform:scaleX(0.9538);color:#000;">Default (stdcall)</span>
<div class="cream" style="left:898px;top:375px;width:140px;height:102px;border-top:1px solid #5c70b0;border-left:1px solid #909090"></div>
<div class="hl" style="left:898px;top:477px;width:140px"></div>
<div style="left:899px;top:376px;width:139px;height:101px;overflow:hidden">
<div class="m" style="left:3px;top:0px"><i>1: [esp+4] 012B4D74</i></div>
<div class="m" style="left:3px;top:11px"><i>2: [esp+8] 7FFDF000</i></div>
<div class="m" style="left:3px;top:22px"><i>3: [esp+C] 001AF1E8</i></div>
<div style="left:0;top:33px;width:139px;height:11px;background:#c3c3c3"></div>
<div class="m" style="left:3px;top:33px"><i>4: [esp+10] 00000001</i></div>
<div class="m" style="left:3px;top:44px"><i>5: [esp+14] 001AFAA0</i></div>
</div>
<svg style="left:690px;top:307px" width="14" height="22" viewBox="0 0 14 22"><path d="M1.5 1.5 V17 L5.2 13.6 L8 19.8 L10.3 18.8 L7.6 12.8 H12.5 Z" fill="#fff" stroke="#202838" stroke-width="1.1"/></svg>
</body></html>
